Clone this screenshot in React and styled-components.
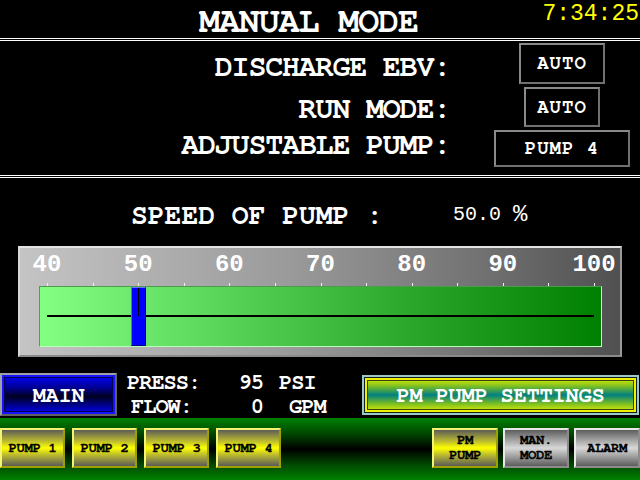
import React from 'react';
import styled, { createGlobalStyle, css } from 'styled-components';

const SERIF_MONO = `"FreeMono", "Courier New", monospace`;
const SANS_MONO = `"Liberation Mono", "DejaVu Sans Mono", monospace`;

const SCALE_MIN = 40;
const SCALE_MAX = 100;
const speed = 50.0;

const settings = [
  { label: 'DISCHARGE EBV:', value: 'AUTO', w: 86, h: 41, top: 10 },
  { label: 'RUN MODE:', value: 'AUTO', w: 76, h: 40, top: 8 },
  { label: 'ADJUSTABLE PUMP:', value: 'PUMP 4', w: 136, h: 37, top: 1 },
];

const pct = (v) => ((v - SCALE_MIN) / (SCALE_MAX - SCALE_MIN)) * 100;

// 화면 전체 (HMI 수동 모드 페이지)
const App = () => {
  const ticks = [];
  for (let v = SCALE_MIN; v <= SCALE_MAX; v += 5) ticks.push(v);
  const labels = ticks.filter((v) => v % 10 === 0);
  const frac = (speed - SCALE_MIN) / (SCALE_MAX - SCALE_MIN);

  return (
    <>
      <GlobalStyle />
      <Screen>
        {/* 상단 타이틀 + 시계 */}
        <Header>
          <Title>MANUAL MODE</Title>
          <Clock>7:34:25</Clock>
        </Header>
        <DoubleRule />

        {/* 설정 목록 */}
        <SettingsGrid>
          {settings.map((s) => (
            <React.Fragment key={s.label}>
              <SettingLabel $top={s.top}>{s.label}</SettingLabel>
              <SettingBox $w={s.w} $h={s.h}>{s.value}</SettingBox>
            </React.Fragment>
          ))}
        </SettingsGrid>
        <DoubleRule />

        {/* 펌프 속도 */}
        <SpeedRow>
          <SpeedLabel>SPEED OF PUMP :</SpeedLabel>
          <SpeedValue>50.0</SpeedValue>
          <Percent>%</Percent>
        </SpeedRow>

        <SliderPanel>
          <ScaleRow>
            {labels.map((v) => (
              <ScaleLabel key={v} style={{ left: `${pct(v)}%` }}>{v}</ScaleLabel>
            ))}
            {ticks.map((v) => (
              <Tick key={v} style={{ left: `${pct(v)}%` }} />
            ))}
          </ScaleRow>
          <Track>
            <TrackLine />
            <Thumb style={{ left: `calc(7px + (100% - 14px) * ${frac} - 7.5px)` }} />
          </Track>
        </SliderPanel>

        {/* 하단 정보 */}
        <InfoBar>
          <MainButton>MAIN</MainButton>
          <Readout>
            <span>PRESS:</span>
            <Value>95</Value>
            <span>PSI</span>
            <Indent $by={4}>FLOW:</Indent>
            <Value>0</Value>
            <Indent $by={10}>GPM</Indent>
          </Readout>
          <SettingsButton>PM PUMP SETTINGS</SettingsButton>
        </InfoBar>

        {/* 네비게이션 버튼 */}
        <Footer>
          <ButtonGroup $gap={7}>
            <FooterButton>PUMP 1</FooterButton>
            <FooterButton>PUMP 2</FooterButton>
            <FooterButton>PUMP 3</FooterButton>
            <FooterButton>PUMP 4</FooterButton>
          </ButtonGroup>
          <ButtonGroup $gap={5}>
            <FooterButton $w={66}>PM<br />PUMP</FooterButton>
            <FooterButton $w={66} $tone="gray">MAN.<br />MODE</FooterButton>
            <FooterButton $w={66} $tone="gray">ALARM</FooterButton>
          </ButtonGroup>
        </Footer>
      </Screen>
    </>
  );
};

export default App;

const GlobalStyle = createGlobalStyle`
  html, body {
    margin: 0;
    padding: 0;
    background: #000;
  }
  * {
    box-sizing: border-box;
  }
`;

const Screen = styled.div`
  width: 640px;
  height: 480px;
  background: #000;
  color: #fff;
  font-family: ${SERIF_MONO};
  font-weight: bold;
  display: flex;
  flex-direction: column;
  overflow: hidden;
`;

const Header = styled.div`
  height: 38px;
  display: flex;
  justify-content: space-between;
  align-items: flex-start;
`;

const Title = styled.div`
  margin: 8px 0 0 199px;
  font-size: 35px;
  line-height: 28px;
  letter-spacing: -1.1px;
  white-space: nowrap;
`;

const Clock = styled.div`
  margin-top: 3px;
  padding-right: 1px;
  font-family: ${SANS_MONO};
  font-weight: normal;
  font-size: 23px;
  line-height: 23px;
  color: #ffff00;
`;

const DoubleRule = styled.div`
  height: 3px;
  border-top: 1px solid #fff;
  border-bottom: 1px solid #fff;
  flex-shrink: 0;
`;

const SettingsGrid = styled.div`
  height: 134px;
  padding-top: 2px;
  display: grid;
  grid-template-columns: 450px 1fr;
  grid-auto-rows: min-content;
  column-gap: 34px;
  row-gap: 3px;
`;

const SettingLabel = styled.div`
  align-self: start;
  margin-top: ${(p) => p.$top}px;
  text-align: right;
  font-size: 30px;
  line-height: 28px;
  letter-spacing: -1.2px;
  white-space: nowrap;
`;

const SettingBox = styled.div`
  justify-self: center;
  width: ${(p) => p.$w}px;
  height: ${(p) => p.$h}px;
  display: flex;
  align-items: center;
  justify-content: center;
  border-top: 2px solid #8a8a8a;
  border-left: 2px solid #8a8a8a;
  border-right: 2px solid #707070;
  border-bottom: 2px solid #707070;
  font-size: 19px;
  letter-spacing: 1px;
  white-space: pre;
`;

const SpeedRow = styled.div`
  height: 68px;
  padding-left: 131px;
  display: flex;
  align-items: flex-start;
`;

const SpeedLabel = styled.div`
  margin-top: 24px;
  font-size: 28px;
  line-height: 28px;
  white-space: pre;
`;

const SpeedValue = styled.div`
  margin: 27px 0 0 70px;
  font-family: ${SANS_MONO};
  font-weight: normal;
  font-size: 20px;
  line-height: 20px;
`;

const Percent = styled.div`
  margin: 25px 0 0 12px;
  font-family: ${SANS_MONO};
  font-weight: normal;
  font-size: 24px;
  line-height: 24px;
`;

const SliderPanel = styled.div`
  margin: 0 18px;
  height: 111px;
  padding: 0 18px 8px 19px;
  border: 2px solid;
  border-color: #e4e4e4 #9a9a9a #8a8a8a #d8d8d8;
  background: linear-gradient(to right, #c4c4c4, #9a9a9a 45%, #747474 75%, #505050);
  display: flex;
  flex-direction: column;
`;

const ScaleRow = styled.div`
  position: relative;
  height: 38px;
  margin: 0 8px;
`;

const ScaleLabel = styled.span`
  position: absolute;
  top: 5px;
  transform: translateX(-50%);
  font-family: ${SANS_MONO};
  font-size: 24px;
  line-height: 24px;
  color: #fff;
`;

const Tick = styled.span`
  position: absolute;
  bottom: 0;
  width: 1px;
  height: 3px;
  background: #f0f0f0;
`;

const Track = styled.div`
  position: relative;
  height: 61px;
  padding: 28px 7px 0;
  border: 1px solid;
  border-color: #4e9a4e #b8ffb8 #b8ffb8 #50a050;
  background: linear-gradient(to right, #84ff84, #5cd85c 30%, #2ca82c 65%, #008000);
`;

const TrackLine = styled.div`
  height: 2px;
  background: #000;
`;

const Thumb = styled.div`
  position: absolute;
  top: 0;
  bottom: 0;
  width: 15px;
  background: #0000ff;
  border: 1px solid;
  border-color: #7070ff #000090 #000090 #6060ff;

  &::after {
    content: '';
    position: absolute;
    left: 6px;
    top: 0;
    width: 1px;
    height: 28px;
    background: #000;
  }
`;

const InfoBar = styled.div`
  height: 61px;
  display: flex;
  align-items: flex-start;
`;

const MainButton = styled.div`
  margin-top: 16px;
  width: 117px;
  height: 43px;
  display: flex;
  align-items: center;
  justify-content: center;
  border: 2px solid;
  border-color: #a0a0a0 #606060 #606060 #a0a0a0;
  box-shadow: inset 0 0 0 2px #1414ff, inset 0 0 0 3px #000050;
  background: linear-gradient(#0000ff, #00008a 35%, #000020 55%, #00009a 80%, #0000ff);
  color: #fff;
  font-size: 22px;
  letter-spacing: -0.3px;
`;

const Readout = styled.div`
  margin: 13px 0 0 10px;
  display: grid;
  grid-template-columns: 72px 48px 1fr;
  column-gap: 16px;
  font-size: 22px;
  line-height: 24px;
  letter-spacing: -1px;
  width: 235px;
  white-space: pre;
`;

const Value = styled.span`
  text-align: right;
`;

const Indent = styled.span`
  padding-left: ${(p) => p.$by}px;
`;

const SettingsButton = styled.div`
  margin-top: 18px;
  width: 277px;
  height: 40px;
  display: flex;
  align-items: center;
  justify-content: center;
  border: 2px solid #9cc8c8;
  box-shadow: inset 0 0 0 1px #102020, inset 0 0 0 3px #f0f000, inset 0 0 0 4px #3a4010;
  background: linear-gradient(#f0f800, #80c020 25%, #008080 50%, #80c020 75%, #f0f800);
  color: #fff;
  font-size: 22px;
  letter-spacing: -0.2px;
  white-space: pre;
`;

const Footer = styled.div`
  flex: 1;
  padding-top: 10px;
  display: flex;
  justify-content: space-between;
  align-items: flex-start;
  background: linear-gradient(#008000, #004800 25%, #000 50%, #004800 75%, #008000);
`;

const ButtonGroup = styled.div`
  display: flex;
  gap: ${(p) => p.$gap}px;
`;

const tones = {
  yellow: css`
    border-color: #f4f470 #a0a000 #a0a000 #f4f470;
    background: linear-gradient(#5c5c58, #b8b830 30%, #ffff00 50%, #b8b830 70%, #5c5c58);
  `,
  gray: css`
    border-color: #e8e8e8 #8c8c8c #8c8c8c #e8e8e8;
    background: linear-gradient(#5c5c5c, #a8a8a8 30%, #d8d8d8 50%, #a8a8a8 70%, #5c5c5c);
  `,
};

const FooterButton = styled.div`
  width: ${(p) => p.$w || 65}px;
  height: 40px;
  display: flex;
  align-items: center;
  justify-content: center;
  text-align: center;
  border: 2px solid;
  ${(p) => tones[p.$tone || 'yellow']}
  color: #000;
  font-size: 14px;
  line-height: 15px;
  letter-spacing: -0.4px;
  white-space: pre;
  -webkit-text-stroke: 0.3px #000;
`;
